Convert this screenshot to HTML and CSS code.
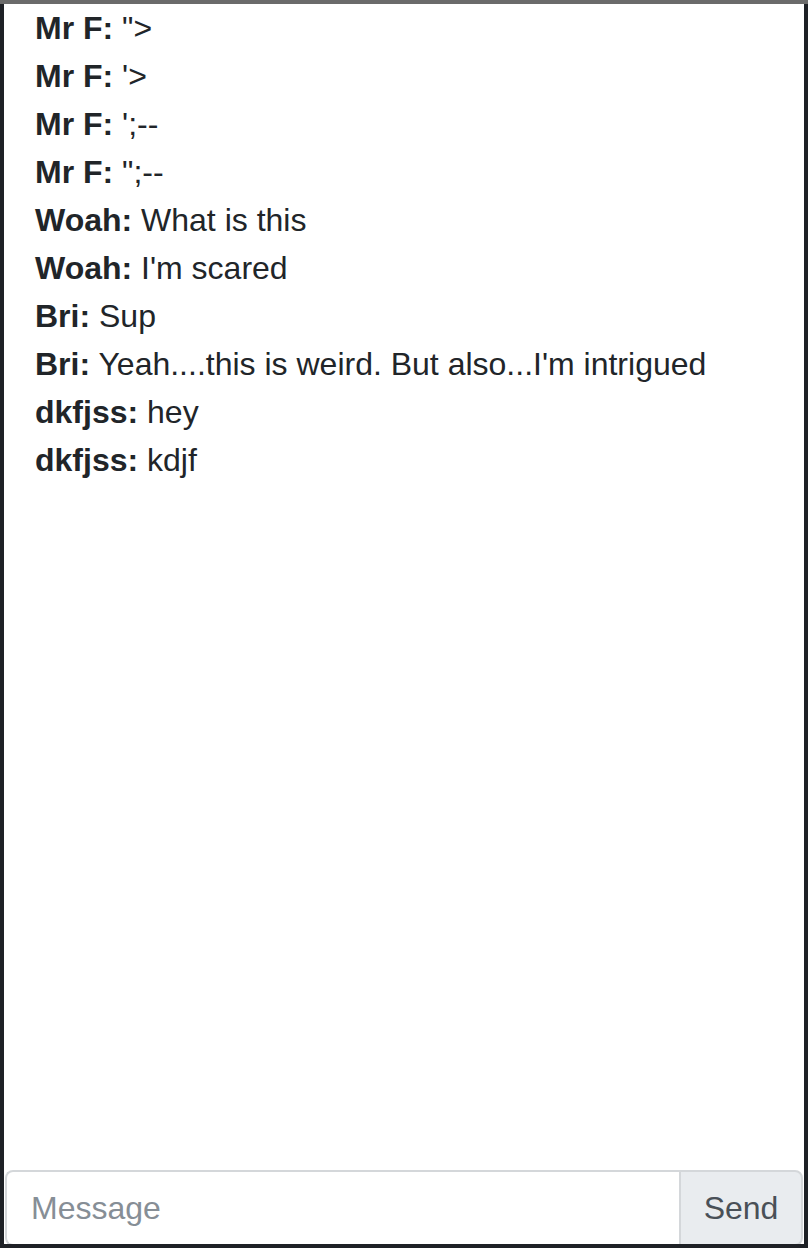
FILE: index.html
```html
<!DOCTYPE html>
<html>
<head>
<meta charset="utf-8">
<link rel="stylesheet" href="styles.css">
</head>
<body>
<div class="panel">
  <ul class="messages">
    <li><b>Mr F:</b> "&gt;</li>
    <li><b>Mr F:</b> '&gt;</li>
    <li><b>Mr F:</b> ';--</li>
    <li><b>Mr F:</b> ";--</li>
    <li><b>Woah:</b> What is this</li>
    <li><b>Woah:</b> I'm scared</li>
    <li><b>Bri:</b> Sup</li>
    <li><b>Bri:</b> Yeah....this is weird. But also...I'm intrigued</li>
    <li><b>dkfjss:</b> hey</li>
    <li><b>dkfjss:</b> kdjf</li>
  </ul>
  <form class="input-group">
    <input class="input" type="text" placeholder="Message">
    <button class="send" type="button">Send</button>
  </form>
</div>
</body>
</html>
```

FILE: styles.css
```css
html, body {
  margin: 0;
  padding: 0;
}
body {
  background: #1e2126;
  border-top: 4px solid #6b6b6b;
  height: 1244px;
  box-sizing: border-box;
  font-family: "Liberation Sans", Arial, sans-serif;
  overflow: hidden;
}
.panel {
  margin: 0 4px;
  height: 1242px;
  background: #fff;
  display: flex;
  flex-direction: column;
}
.messages {
  list-style: none;
  margin: 0;
  padding: 0 0 0 31px;
  flex: 1;
  font-size: 32px;
  line-height: 48px;
  color: #212529;
}
.messages b {
  font-weight: bold;
}
.input-group {
  display: flex;
  margin: 0 1px;
  height: 76px;
}
.input {
  flex: 1;
  min-width: 0;
  border: 2px solid #d4d7da;
  border-right: none;
  border-radius: 8px 0 0 8px;
  padding: 0 24px;
  font-family: "Liberation Sans", Arial, sans-serif;
  font-size: 32px;
  color: #495057;
  outline: none;
  background: #fff;
}
.input::placeholder {
  color: #868e96;
}
.send {
  width: 124px;
  border: 2px solid #d4d7da;
  border-radius: 0 8px 8px 0;
  background: #e9ecef;
  color: #495057;
  font-family: "Liberation Sans", Arial, sans-serif;
  font-size: 32px;
  padding: 0;
}
```
